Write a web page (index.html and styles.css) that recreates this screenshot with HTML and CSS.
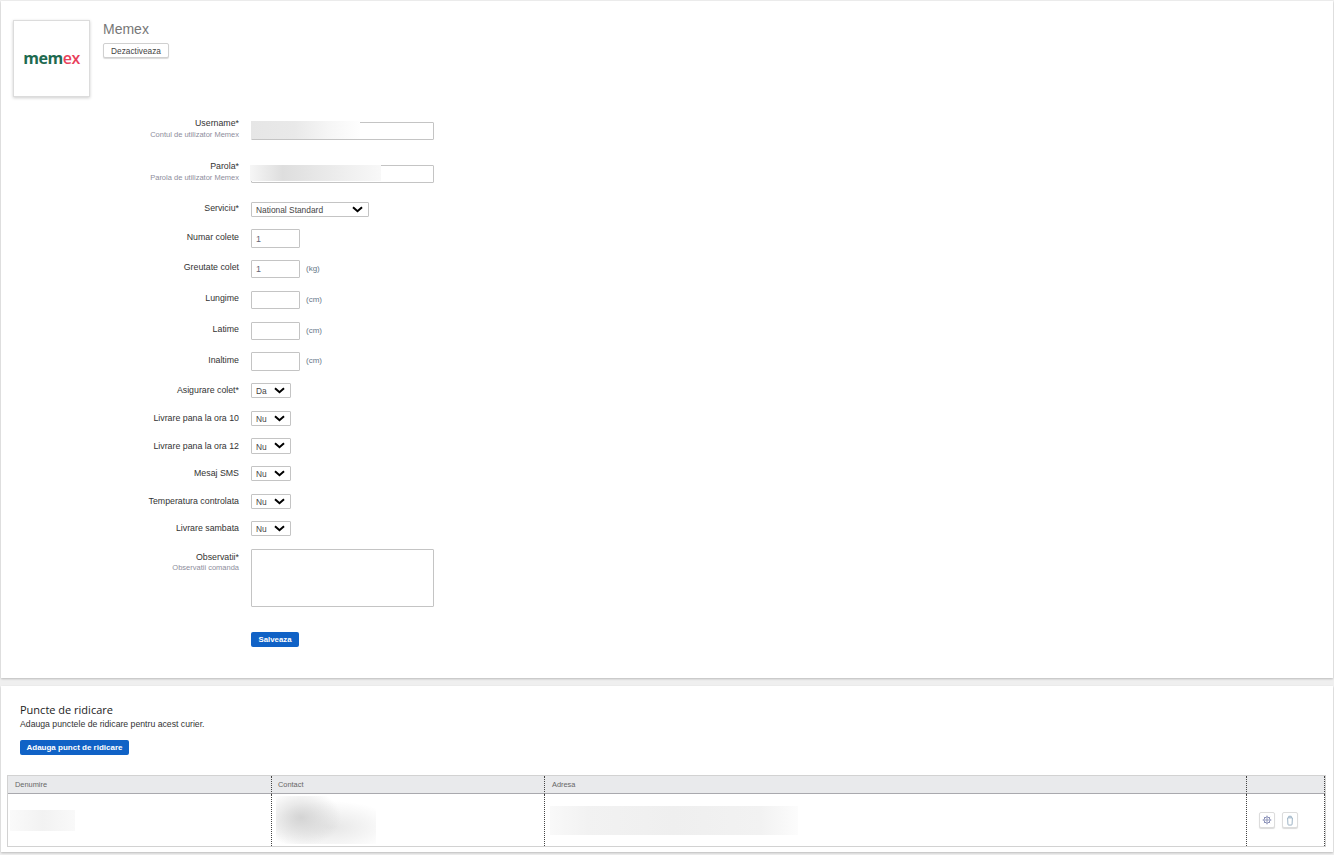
FILE: index.html
```html
<!DOCTYPE html>
<html lang="ro">
<head>
<meta charset="utf-8">
<title>Memex</title>
<link rel="stylesheet" href="styles.css">
</head>
<body>
<section class="panel panel-main">
  <header class="courier">
    <div class="logo-box"><span class="logo"><span class="logo-green">mem</span><span class="logo-red">ex</span></span></div>
    <div class="courier-info">
      <h1 class="courier-name">Memex</h1>
      <button class="btn-light" type="button">Dezactiveaza</button>
    </div>
  </header>
  <form class="form">
    <div class="row row-hint gap-20">
      <div class="label-col"><label class="label">Username*</label><span class="hint">Contul de utilizator Memex</span></div>
      <div class="control redact-wrap"><input class="input input-wide" type="text"><span class="redact redact-user"></span></div>
    </div>
    <div class="row row-hint gap-19">
      <div class="label-col"><label class="label">Parola*</label><span class="hint">Parola de utilizator Memex</span></div>
      <div class="control redact-wrap"><input class="input input-wide" type="text"><span class="redact redact-pass"></span></div>
    </div>
    <div class="row gap-12">
      <div class="label-col"><label class="label">Serviciu*</label></div>
      <div class="control"><select class="select select-wide"><option>National Standard</option></select></div>
    </div>
    <div class="row gap-12">
      <div class="label-col"><label class="label">Numar colete</label></div>
      <div class="control"><input class="input input-small input-tall" type="text" value="1"></div>
    </div>
    <div class="row row-input gap-13">
      <div class="label-col"><label class="label">Greutate colet</label></div>
      <div class="control"><input class="input input-small" type="text" value="1"><span class="unit">(kg)</span></div>
    </div>
    <div class="row row-input gap-13">
      <div class="label-col"><label class="label">Lungime</label></div>
      <div class="control"><input class="input input-small" type="text"><span class="unit">(cm)</span></div>
    </div>
    <div class="row row-input gap-12">
      <div class="label-col"><label class="label">Latime</label></div>
      <div class="control"><input class="input input-small" type="text"><span class="unit">(cm)</span></div>
    </div>
    <div class="row gap-12">
      <div class="label-col"><label class="label">Inaltime</label></div>
      <div class="control"><input class="input input-small input-tall" type="text"><span class="unit">(cm)</span></div>
    </div>
    <div class="row row-choice gap-13">
      <div class="label-col"><label class="label">Asigurare colet*</label></div>
      <div class="control"><select class="select select-small"><option>Da</option></select></div>
    </div>
    <div class="row row-choice gap-12">
      <div class="label-col"><label class="label">Livrare pana la ora 10</label></div>
      <div class="control"><select class="select select-small"><option>Nu</option></select></div>
    </div>
    <div class="row row-choice gap-12">
      <div class="label-col"><label class="label">Livrare pana la ora 12</label></div>
      <div class="control"><select class="select select-small select-tall"><option>Nu</option></select></div>
    </div>
    <div class="row row-choice gap-13">
      <div class="label-col"><label class="label">Mesaj SMS</label></div>
      <div class="control"><select class="select select-small"><option>Nu</option></select></div>
    </div>
    <div class="row row-choice gap-12">
      <div class="label-col"><label class="label">Temperatura controlata</label></div>
      <div class="control"><select class="select select-small"><option>Nu</option></select></div>
    </div>
    <div class="row row-choice gap-13">
      <div class="label-col"><label class="label">Livrare sambata</label></div>
      <div class="control"><select class="select select-small"><option>Nu</option></select></div>
    </div>
    <div class="row row-top gap-25">
      <div class="label-col label-col-top"><label class="label">Observatii*</label><span class="hint">Observatii comanda</span></div>
      <div class="control"><textarea class="textarea"></textarea></div>
    </div>
    <div class="row">
      <div class="label-col"></div>
      <div class="control"><button class="btn-primary" type="button">Salveaza</button></div>
    </div>
  </form>
</section>
<section class="panel panel-points">
  <div class="points-head">
    <h2 class="points-title">Puncte de ridicare</h2>
    <p class="points-sub">Adauga punctele de ridicare pentru acest curier.</p>
    <button class="btn-primary btn-add" type="button">Adauga punct de ridicare</button>
  </div>
  <table class="table">
    <colgroup><col class="col-a"><col class="col-b"><col class="col-c"><col class="col-d"></colgroup>
    <thead>
      <tr><th>Denumire</th><th>Contact</th><th class="th-address">Adresa</th><th></th></tr>
    </thead>
    <tbody>
      <tr>
        <td class="cell-name"><div class="blur blur-name"></div></td>
        <td class="cell-contact"><div class="blur blur-contact"></div></td>
        <td class="cell-address"><div class="blur blur-address"></div></td>
        <td class="cell-actions">
          <div class="actions">
            <button class="btn-icon" type="button" aria-label="Editeaza">
              <svg viewBox="0 0 12 12" width="10" height="10" fill="none" stroke="#7f86b0" stroke-width="1.1"><circle cx="6" cy="6" r="3.6"/><circle cx="6" cy="6" r="1.4"/><path d="M6 .8v1.6M6 9.6v1.6M.8 6h1.6M9.6 6h1.6M2.3 2.3l1.1 1.1M8.6 8.6l1.1 1.1M2.3 9.7l1.1-1.1M8.6 3.4l1.1-1.1"/></svg>
            </button>
            <button class="btn-icon" type="button" aria-label="Sterge">
              <svg viewBox="0 0 10 13" width="8" height="11" fill="none" stroke="#8fa9bd" stroke-width="1.1"><path d="M2 3.2h6l-.4 8a1 1 0 0 1-1 1H3.400a1 1 0 0 1-1-1z"/><path d="M3.400 3V1.200h3.200V3"/></svg>
            </button>
          </div>
        </td>
      </tr>
    </tbody>
  </table>
</section>
</body>
</html>
```
FILE: styles.css
```css
* { box-sizing: border-box; }
html, body { height: 100%; }
body {
  margin: 0;
  padding: 1px 1px 0;
  background: #efefef;
  font-family: "Liberation Sans", Arial, sans-serif;
  font-size: 9px;
  color: #333;
  overflow: hidden;
}
.panel {
  background: #fff;
  box-shadow: 0 1px 2px rgba(0, 0, 0, .22);
}
.panel-main { height: 677px; padding: 19px 0 0 12px; margin-bottom: 8px; }
.panel-points { height: 166px; position: relative; padding: 17px 6px 0; }

.courier { display: flex; height: 77px; }
.logo-box {
  width: 77px;
  height: 77px;
  border: 1px solid #dcdcdc;
  box-shadow: 0 1px 3px rgba(0, 0, 0, .2);
  display: flex;
  align-items: center;
  justify-content: center;
}
.logo {
  font-family: "Open Sans", "Liberation Sans", sans-serif;
  font-size: 16px;
  font-weight: 700;
  letter-spacing: -.5px;
  line-height: 17px;
}
.logo-green { color: #1e6a50; }
.logo-red { color: #e8405a; font-weight: 600; }
.courier-info { margin-left: 13px; padding-top: 1px; }
.courier-name {
  margin: 0;
  font-size: 14px;
  font-weight: 400;
  line-height: 17px;
  color: #777;
}
.btn-light {
  display: block;
  margin-top: 5px;
  width: 66px;
  height: 15px;
  padding: 0;
  background: #fff;
  border: 1px solid #d0d0d0;
  border-radius: 2px;
  box-shadow: 0 1px 1px rgba(0, 0, 0, .15);
  font: 8.3px "Liberation Sans", Arial, sans-serif;
  color: #444;
}

.form { margin: 20px 0 0 -12px; }
.row {
  display: grid;
  grid-template-columns: 238px 1fr;
  column-gap: 12px;
  align-items: center;
}
.row-hint, .row-top { align-items: start; }
.gap-12 { margin-bottom: 12px; }
.gap-13 { margin-bottom: 13px; }
.gap-19 { margin-bottom: 19px; }
.gap-20 { margin-bottom: 20px; }
.gap-25 { margin-bottom: 25px; }
.label-col { text-align: right; position: relative; top: -1px; }
.row-hint .label-col { top: 1px; }
.row-input .label-col { top: -2px; }
.row-choice .label-col { top: 0; }
.label-col-top { top: 3px; }
.label { display: block; font-size: 8.8px; line-height: 11px; color: #333; }
.hint { display: block; font-size: 7.5px; line-height: 11px; color: #8e8e9c; }
.label-col-top .hint { margin-top: -1px; }
.control { display: flex; align-items: center; }
.row-hint .control { padding-top: 5px; }

.input {
  height: 18px;
  padding: 0 4px;
  border: 1px solid #c4c4c4;
  border-radius: 1px;
  background: #fff;
  font: 9px "Liberation Sans", Arial, sans-serif;
  color: #667;
}
.input-wide { width: 183px; }
.input-small { width: 49px; }
.input-tall { height: 19px; }
.unit { margin: 0 0 2px 6px; font-size: 8px; color: #667788; }

.redact-wrap { position: relative; }
.redact { position: absolute; top: 4px; height: 18px; }
.redact-user {
  left: 0;
  width: 109px;
  background: linear-gradient(90deg, #e6e6e6 0, #e9e9e9 40%, #f6f6f6 72%, #fefefe 100%);
}
.redact-pass {
  left: -1px;
  width: 131px;
  top: 5px;
  height: 16px;
  background: linear-gradient(90deg, #f6f6f6 0, #dedede 25%, #ececec 65%, #f8f8f8 100%);
}

.select {
  appearance: none;
  height: 15px;
  padding: 1px 0 0 4px;
  border: 1px solid #c4c4c4;
  border-radius: 1px;
  background-color: #fff;
  background-image: url("data:image/svg+xml,%3Csvg xmlns='http://www.w3.org/2000/svg' viewBox='0 0 11 7'%3E%3Cpath d='M1 1.2l4.500 4 4.500-4' fill='none' stroke='%23000' stroke-width='2'/%3E%3C/svg%3E");
  background-repeat: no-repeat;
  background-size: 11px 7px;
  font: 8.4px "Liberation Sans", Arial, sans-serif;
  color: #444;
}
.select-wide { width: 118px; background-position: 100px 3px; }
.select-small { width: 40px; background-position: 22px 3px; }
.select-tall { height: 16px; }
.textarea {
  display: block;
  width: 183px;
  height: 58px;
  border: 1px solid #c4c4c4;
  border-radius: 1px;
  resize: none;
  background: #fff;
}

.btn-primary {
  width: 48px;
  height: 15px;
  padding: 0;
  border: 0;
  border-radius: 2px;
  background: #1062c6;
  color: #fff;
  font: 700 7.8px "Liberation Sans", Arial, sans-serif;
}

.points-head { padding-left: 13px; }
.points-title {
  margin: 0;
  font: 400 11px/13px "Open Sans", "Liberation Sans", sans-serif;
  color: #222;
}
.points-sub { margin: 2px 0 0; font-size: 8.7px; line-height: 12px; color: #333; }
.btn-add { display: block; width: 109px; margin-top: 10px; font-size: 8px; }

.table {
  width: 1319px;
  margin-top: 20px;
  border-collapse: separate;
  border-spacing: 0;
  table-layout: fixed;
  border: 1px solid #d2d2d2;
}
.col-a { width: 263px; }
.col-b { width: 273px; }
.col-c { width: 702px; }
.col-d { width: 79px; }
.table th {
  height: 18px;
  padding: 0 0 0 6px;
  background: #e9eaec;
  border-bottom: 1px solid #a9a9ae;
  border-left: 1px dotted #444;
  font-size: 7.4px;
  font-weight: 400;
  color: #666;
  text-align: left;
}
.table th:first-child, .table .th-address { padding-left: 7px; }
.table th:first-child, .table td:first-child { border-left: 0; }
.table th:last-child, .table td:last-child { border-right: 1px dotted #444; }
.table td {
  height: 52px;
  padding: 0;
  border-left: 1px dotted #444;
}
.blur { background: #f1f1f1; }
.cell-name { padding-left: 2px !important; }
.blur-name {
  width: 65px;
  height: 21px;
  background: linear-gradient(90deg, #fafafa, #f2f2f2 50%, #f9f9f9);
}
.cell-contact { padding-left: 4px !important; }
.blur-contact {
  width: 100px;
  height: 48px;
  background:
    radial-gradient(ellipse 40% 60% at 25% 45%, rgba(208, 208, 208, .9) 0, rgba(208, 208, 208, 0) 100%),
    radial-gradient(ellipse 65% 55% at 55% 65%, rgba(226, 226, 226, .85) 0, rgba(226, 226, 226, 0) 100%),
    #fff;
}
.cell-address { padding-left: 5px !important; }
.blur-address {
  width: 248px;
  height: 29px;
  background: linear-gradient(90deg, #f9f9f9, #f2f2f2 15%, #efefef 50%, #f2f2f2 85%, #fcfcfc);
}
.actions { display: flex; gap: 7px; padding-left: 12px; }
.btn-icon {
  display: flex;
  align-items: center;
  justify-content: center;
  width: 16px;
  height: 16px;
  padding: 0;
  background: #fff;
  border: 1px solid #dcdcdc;
  border-radius: 2px;
  box-shadow: 0 1px 1px rgba(0, 0, 0, .15);
}
```
